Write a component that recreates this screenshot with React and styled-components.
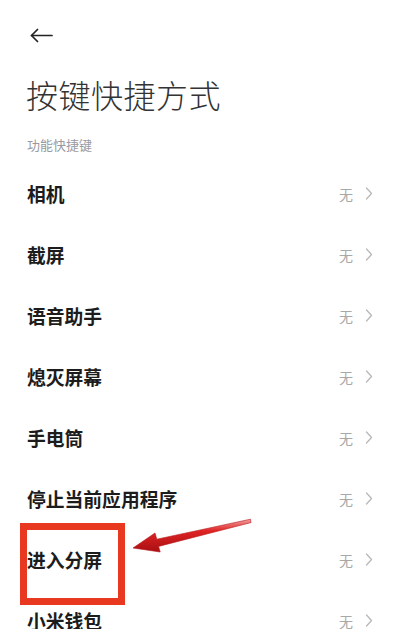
import styled, { createGlobalStyle } from "styled-components";

const GlobalStyle = createGlobalStyle`
    html, body {
        margin: 0;
        padding: 0;
        background: #ffffff;
    }
    body {
        font-family: "Noto Sans CJK SC", "Noto Sans", sans-serif;
        overflow: hidden;
    }
`;

const Page = styled.div`
    position: relative;
    width: 406px;
    height: 629px;
    overflow: hidden;
    background: #ffffff;
`;

const NavBar = styled.div`
    height: 71px;
    display: flex;
    align-items: center;
    padding-left: 30px;
    box-sizing: border-box;
`;

const BackButton = styled.button`
    border: 0;
    padding: 0;
    background: none;
    display: flex;
    align-items: center;
    color: #222;
`;

const Title = styled.h1`
    margin: 0;
    padding-left: 26px;
    font-size: 32px;
    line-height: 46px;
    font-weight: 300;
    color: #333333;
    letter-spacing: 0.5px;
`;

const SectionLabel = styled.div`
    margin-top: 18px;
    padding-left: 27px;
    font-size: 13px;
    line-height: 20px;
    color: #9a9a9f;
`;

const List = styled.ul`
    list-style: none;
    margin: 8px 0 0;
    padding: 0;
`;

const Row = styled.li`
    height: 61px;
    display: flex;
    align-items: center;
    justify-content: space-between;
    padding: 0 33px 0 27px;
`;

const RowLabel = styled.span`
    font-size: 18.8px;
    font-weight: 600;
    color: #1c1c1c;
`;

const RowValue = styled.span`
    display: flex;
    align-items: center;
    gap: 12px;
    font-size: 14px;
    color: #a8a8a8;
`;

const Highlight = styled.div`
    position: absolute;
    left: 20px;
    top: 523px;
    width: 105px;
    height: 82px;
    box-sizing: border-box;
    border: 7px solid #e8381f;
    pointer-events: none;
`;

const Arrow = styled.svg`
    position: absolute;
    left: 0;
    top: 0;
    pointer-events: none;
`;

const items = [
    "相机",
    "截屏",
    "语音助手",
    "熄灭屏幕",
    "手电筒",
    "停止当前应用程序",
    "进入分屏",
    "小米钱包",
];

const BackIcon = () => (
    <svg width="23" height="15" viewBox="0 0 23 15" fill="none" stroke="currentColor" strokeWidth="1.7" strokeLinecap="round" strokeLinejoin="round">
        <path d="M22 7.5H1.5" />
        <path d="M7.5 1.5L1.5 7.5L7.5 13.5" />
    </svg>
);

const Chevron = () => (
    <svg width="8" height="13" viewBox="0 0 8 13" fill="none" stroke="#b8b8b8" strokeWidth="1.3" strokeLinecap="round" strokeLinejoin="round">
        <path d="M1.5 1L6.5 6.5L1.5 12" />
    </svg>
);

export default function App() {
    return (
        <Page>
            <GlobalStyle />
            <NavBar>
                <BackButton aria-label="返回">
                    <BackIcon />
                </BackButton>
            </NavBar>
            <Title>按键快捷方式</Title>
            <SectionLabel>功能快捷键</SectionLabel>
            <List>
                {items.map(name => (
                    <Row key={name}>
                        <RowLabel>{name}</RowLabel>
                        <RowValue>
                            无
                            <Chevron />
                        </RowValue>
                    </Row>
                ))}
            </List>

            {/* annotation drawn over the screenshot */}
            <Highlight />
            <Arrow width="406" height="629" viewBox="0 0 406 629">
                <defs>
                    <linearGradient id="arrowFill" x1="0" y1="0" x2="0" y2="1">
                        <stop offset="0" stopColor="#f2a0a0" />
                        <stop offset="0.35" stopColor="#e02424" />
                        <stop offset="1" stopColor="#a80f12" />
                    </linearGradient>
                </defs>
                <polygon
                    points="250.5,519.2 251,522.6 158.6,546.4 160.2,552 133,548 155,533 156.8,539.2"
                    fill="url(#arrowFill)"
                    stroke="#b51418"
                    strokeWidth="0.6"
                    strokeLinejoin="round"
                />
            </Arrow>
        </Page>
    );
}
